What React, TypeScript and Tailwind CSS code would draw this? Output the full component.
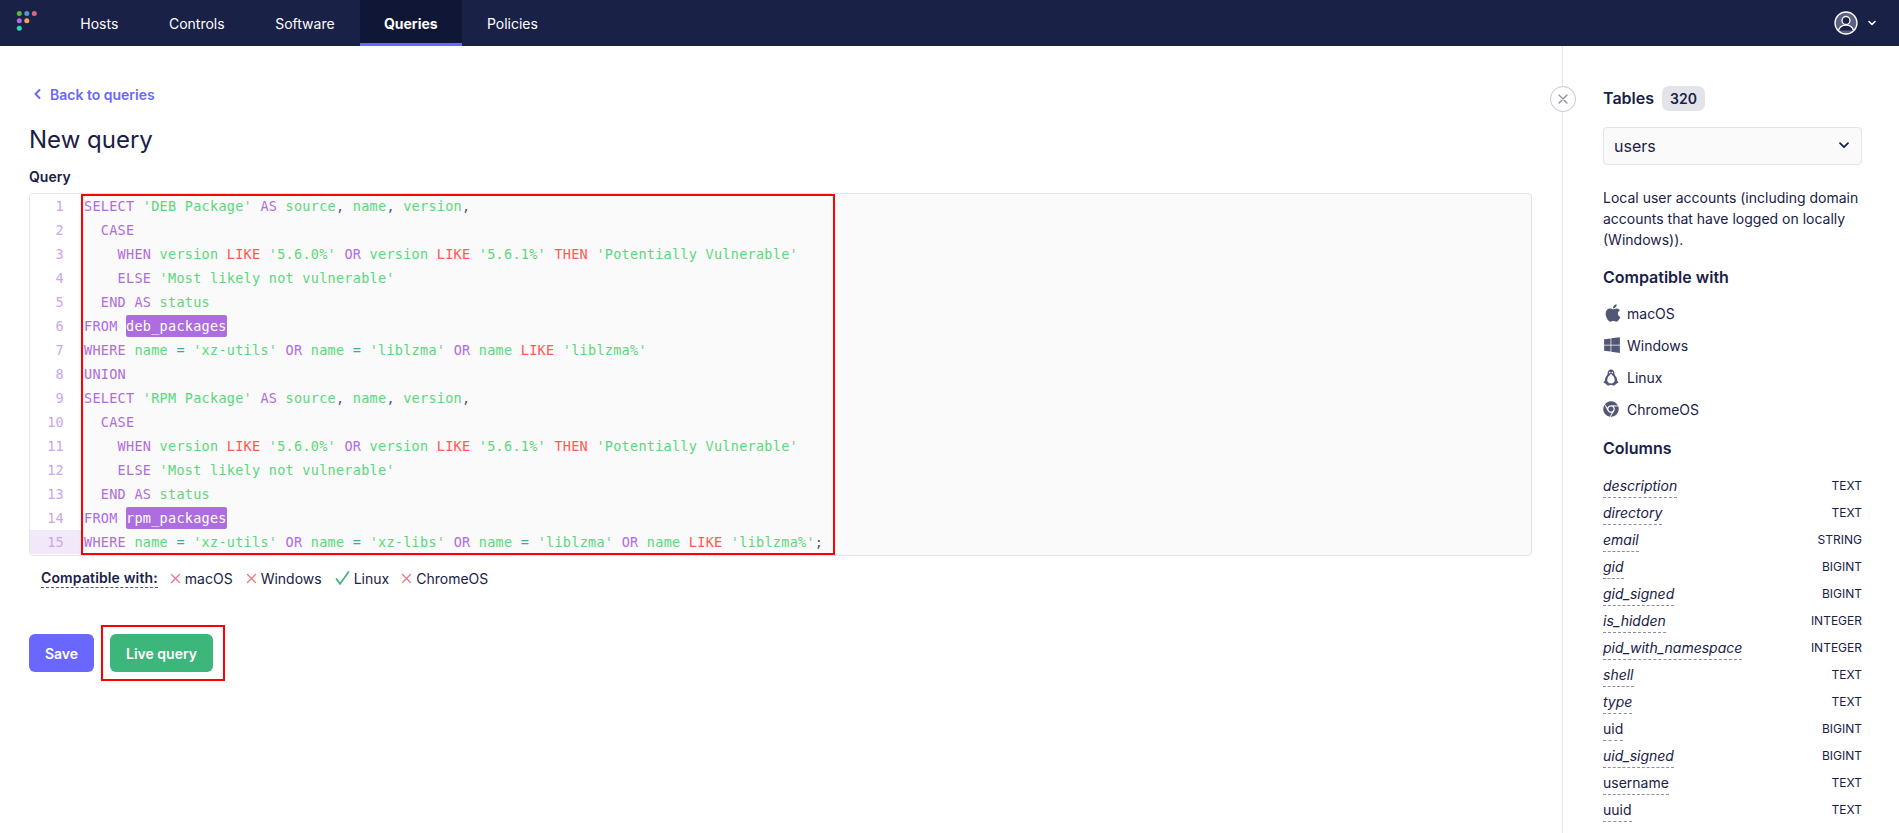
import { FaApple, FaWindows, FaChrome } from "react-icons/fa";

const NAV = ["Hosts", "Controls", "Software", "Queries", "Policies"];

const SQL = [
  "SELECT 'DEB Package' AS source, name, version,",
  "  CASE",
  "    WHEN version LIKE '5.6.0%' OR version LIKE '5.6.1%' THEN 'Potentially Vulnerable'",
  "    ELSE 'Most likely not vulnerable'",
  "  END AS status",
  "FROM deb_packages",
  "WHERE name = 'xz-utils' OR name = 'liblzma' OR name LIKE 'liblzma%'",
  "UNION",
  "SELECT 'RPM Package' AS source, name, version,",
  "  CASE",
  "    WHEN version LIKE '5.6.0%' OR version LIKE '5.6.1%' THEN 'Potentially Vulnerable'",
  "    ELSE 'Most likely not vulnerable'",
  "  END AS status",
  "FROM rpm_packages",
  "WHERE name = 'xz-utils' OR name = 'xz-libs' OR name = 'liblzma' OR name LIKE 'liblzma%';",
];

const PURPLE = new Set(["SELECT", "AS", "CASE", "WHEN", "OR", "ELSE", "END", "FROM", "WHERE", "UNION"]);
const RED = new Set(["LIKE", "THEN"]);
const TABLES = new Set(["deb_packages", "rpm_packages"]);

function Token({ t }: { t: string }) {
  if (PURPLE.has(t)) return <span className="text-[#ae6ddf]">{t}</span>;
  if (RED.has(t)) return <span className="text-[#ff5850]">{t}</span>;
  if (TABLES.has(t)) return <span className="bg-[#ae6ddf] text-white rounded-[2px] py-[3px]">{t}</span>;
  if (t === "=") return <span className="text-[#3aa7a0]">{t}</span>;
  if (t === "," || t === ";") return <span className="text-[#515774]">{t}</span>;
  return <span className="text-[#5bd87a]">{t}</span>;
}

function CodeLine({ s }: { s: string }) {
  const parts = s.match(/'[^']*'|[A-Za-z_]+|[,;=]|\s+/g) ?? [];
  return (
    <div className="h-6 leading-6 whitespace-pre pl-[1px]">
      {parts.map((p, i) => (/^\s+$/.test(p) ? <span key={i}>{p}</span> : <Token key={i} t={p} />))}
    </div>
  );
}

function XMark() {
  return (
    <svg width="11" height="11" viewBox="0 0 11 11" fill="none" stroke="#e8798c" strokeWidth="1.3" strokeLinecap="round">
      <path d="M1.500 1.500l8 8M9.500 1.500l-8 8" />
    </svg>
  );
}

function Check() {
  return (
    <svg width="15" height="14" viewBox="0 0 15 14" fill="none" stroke="#3db67b" strokeWidth="1.7" strokeLinecap="round" strokeLinejoin="round">
      <path d="M1.500 8l3.500 5L13.500 1" />
    </svg>
  );
}

function Penguin() {
  return (
    <svg width="16" height="17" viewBox="0 0 16 17">
      <path d="M8 .5C5.700.5 4.600 2.300 4.600 4.500c0 1-.5 1.700-1.300 2.800C2.300 8.700 1.800 10 1.900 11.500L.5 13.600c.9.800 1.700.9 2.400 1.400.9.800 1.400 1.500 2.300 1.500.9 0 1.500-.6 2.800-.6s1.900.6 2.800.6c.9 0 1.400-.7 2.300-1.500.7-.5 1.500-.6 2.400-1.400l-1.400-2.100c.1-1.500-.4-2.800-1.400-4.200-.8-1.100-1.300-1.800-1.300-2.800C11.400 2.300 10.300.500 8 .500z" fill="#515774" />
      <path d="M8 6c-2.200 0-3.700 2.500-3.700 5.300 0 1.700 1.500 3.200 3.700 3.200s3.700-1.500 3.700-3.200C11.700 8.500 10.200 6 8 6z" fill="#fff" />
      <circle cx="6.700" cy="3.600" r=".8" fill="#fff" />
      <circle cx="9.300" cy="3.600" r=".8" fill="#fff" />
      <path d="M6.800 5L8 6.200 9.200 5z" fill="#fff" />
    </svg>
  );
}

const COMPAT: [string, boolean, string][] = [
  ["macOS", false, "mr-[13px]"],
  ["Windows", false, "mr-[13px]"],
  ["Linux", true, "mr-[12px]"],
  ["ChromeOS", false, ""],
];

const COLUMNS: [string, string, boolean][] = [
  ["description", "TEXT", true],
  ["directory", "TEXT", true],
  ["email", "STRING", true],
  ["gid", "BIGINT", true],
  ["gid_signed", "BIGINT", true],
  ["is_hidden", "INTEGER", true],
  ["pid_with_namespace", "INTEGER", true],
  ["shell", "TEXT", true],
  ["type", "TEXT", true],
  ["uid", "BIGINT", false],
  ["uid_signed", "BIGINT", true],
  ["username", "TEXT", false],
  ["uuid", "TEXT", false],
];

const PLATFORMS: [string, React.ReactNode][] = [
  ["macOS", <FaApple size={20} />],
  ["Windows", <FaWindows size={18} />],
  ["Linux", <Penguin />],
  ["ChromeOS", <FaChrome size={16} />],
];

export default function App() {
  return (
    <div className="h-screen overflow-hidden bg-white text-[#192147] font-['Inter',sans-serif] flex flex-col">
      <nav className="h-[46px] shrink-0 bg-[#192147] flex items-stretch pl-[16px] pr-[19px]">
        <svg width="21" height="24" viewBox="0 0 21 24" className="mt-[10px] mr-[18px] shrink-0">
          <circle cx="3.300" cy="3.400" r="2.500" fill="#5cb83c" />
          <circle cx="10.800" cy="3.400" r="2.500" fill="#4a9ad4" />
          <circle cx="18.300" cy="3.400" r="2.500" fill="#d66c7b" />
          <circle cx="3.300" cy="10.800" r="2.500" fill="#ae6ddf" />
          <circle cx="10.800" cy="10.800" r="2.500" fill="#f6a25b" />
          <circle cx="3.300" cy="18.300" r="2.500" fill="#2bd9b9" />
        </svg>
        {NAV.map((n) =>
          n === "Queries" ? (
            <div key={n} className="px-[24px] flex items-center bg-[#0f1636] border-b-[3px] border-[#6a67fe] pt-[3px] text-[14px] font-bold text-white">
              {n}
            </div>
          ) : (
            <div key={n} className="px-[25.300px] flex items-center text-[14px] text-white">
              {n}
            </div>
          )
        )}
        <div className="ml-auto flex items-center gap-[10px] pr-[4px]">
          <svg width="24" height="24" viewBox="0 0 24 24" fill="none">
            <circle cx="12" cy="12" r="11" fill="#5b6183" stroke="#fff" strokeWidth="1.300" />
            <circle cx="12" cy="9.500" r="4" fill="#192147" stroke="#fff" strokeWidth="1.300" />
            <path d="M4.500 19.500c1-3.600 4-5.300 7.500-5.300s6.500 1.700 7.500 5.300" stroke="#fff" strokeWidth="1.300" fill="#192147" />
          </svg>
          <svg width="8" height="6" viewBox="0 0 8 6" fill="none" stroke="#fff" strokeWidth="1.500" strokeLinecap="round" strokeLinejoin="round">
            <path d="M1 1.500l3 3 3-3" />
          </svg>
        </div>
      </nav>

      <div className="flex flex-1 min-h-0">
        <main className="flex-1 min-w-0 pl-[29px] pr-[30px] pt-[38px]">
          <div className="flex items-center gap-[9px] h-[20px] pl-[5px] text-[14px] font-semibold text-[#6a67fe]">
            <svg width="7" height="10" viewBox="0 0 7 10" fill="none" stroke="#6a67fe" strokeWidth="1.900" strokeLinecap="round" strokeLinejoin="round">
              <path d="M5.500 1L1.500 5l4 4" />
            </svg>
            Back to queries
          </div>
          <h1 className="mt-[20px] text-[24px] leading-[32px] font-normal">New query</h1>
          <div className="mt-[11px] h-[20px] text-[14px] leading-[20px] font-semibold">Query</div>
          <div className="mt-[6px] h-[363px] flex rounded-[4px] border border-[#e2e4ea] bg-[#fafafa] overflow-hidden font-['DejaVu_Sans_Mono',monospace] text-[13.500px] tracking-[0.27px]">
            <div className="w-[51px] shrink-0 bg-white flex flex-col text-right text-[#c9a6ef]">
              {SQL.map((_, i) =>
                i === 14 ? (
                  <div key={i} className="h-6 leading-6 pr-[17px] bg-[#f1e8fa] text-[#c9a6ef]">{i + 1}</div>
                ) : (
                  <div key={i} className="h-6 leading-6 pr-[17px]">{i + 1}</div>
                )
              )}
            </div>
            <div className="w-[754px] shrink-0 border-2 border-[#ff0000] overflow-hidden">
              <div className="-mt-[2px]">
                {SQL.map((s, i) => (
                  <CodeLine key={i} s={s} />
                ))}
              </div>
            </div>
          </div>
          <div className="mt-[10px] ml-[12px] flex items-center h-[24px] text-[14px]">
            <span className="font-semibold tracking-[0.14px] border-b border-dashed border-[#515774] leading-[19px] mr-[12px]">Compatible with:</span>
            {COMPAT.map(([name, ok, mr]) => (
              <span key={name} className={`flex items-center gap-[4px] ${mr}`}>
                {ok ? <Check /> : <XMark />}
                {name}
              </span>
            ))}
          </div>
          <div className="mt-[35px] flex items-start gap-[7px]">
            <button className="mt-[9px] h-[38px] w-[65px] rounded-[6px] bg-[#6a67fe] text-white text-[14px] font-semibold">Save</button>
            <div className="border-2 border-[#ff0000] pl-[7px] pr-[10px] pt-[7px] pb-[7px]">
              <button className="block h-[38px] w-[103px] rounded-[6px] bg-[#3db67b] text-white text-[14px] font-semibold">Live query</button>
            </div>
          </div>
        </main>

        <aside className="relative w-[337px] shrink-0 border-l border-[#e2e4ea] pl-[40px] pr-[37px] pt-[39px] text-[14px]">
          <div className="absolute left-[-13px] top-[40px] w-[26px] h-[26px] rounded-full border border-[#c5c7d1] bg-white flex items-center justify-center">
            <svg width="10" height="10" viewBox="0 0 10 10" fill="none" stroke="#8b8fa2" strokeWidth="1.300" strokeLinecap="round">
              <path d="M1 1l8 8M9 1l-8 8" />
            </svg>
          </div>
          <div className="flex items-center gap-[8px] h-[26px] text-[16px] font-semibold">
            Tables
            <span className="h-[25px] px-[8px] rounded-[7px] bg-[#e2e4ea] text-[14px] leading-[25px]">320</span>
          </div>
          <div className="mt-[16px] h-[38px] rounded-[4px] border border-[#e2e4ea] bg-[#fafafa] flex items-center justify-between pl-[10px] pr-[12px] text-[#192147] text-[16px] pb-[1px]">
            users
            <svg width="10" height="7" viewBox="0 0 10 7" fill="none" stroke="#192147" strokeWidth="1.800" strokeLinecap="round" strokeLinejoin="round">
              <path d="M1 1.200l4 4 4-4" />
            </svg>
          </div>
          <p className="mt-[22px] leading-[21px]">
            Local user accounts (including domain accounts that have logged on locally (Windows)).
          </p>
          <h2 className="mt-[15px] text-[16px] leading-[24px] font-semibold">Compatible with</h2>
          <div className="mt-[14px] flex flex-col gap-[12px]">
            {PLATFORMS.map(([name, icon]) => (
              <div key={name} className="flex items-center h-[20px]">
                <span className="w-[24px] text-[#515774] flex items-center">{icon}</span>
                {name}
              </div>
            ))}
          </div>
          <h2 className="mt-[17px] text-[16px] leading-[24px] font-semibold">Columns</h2>
          <div className="mt-[16px] flex flex-col">
            {COLUMNS.map(([name, type, italic]) => (
              <div key={name} className="h-[27px] flex justify-between items-start">
                {italic ? (
                  <span className="italic leading-[20px] border-b border-dashed border-[#8b8fa2] h-[22px]">{name}</span>
                ) : (
                  <span className="leading-[20px] border-b border-dashed border-[#8b8fa2] h-[22px]">{name}</span>
                )}
                <span className="text-[12px] leading-[20px]">{type}</span>
              </div>
            ))}
          </div>
        </aside>
      </div>
    </div>
  );
}
